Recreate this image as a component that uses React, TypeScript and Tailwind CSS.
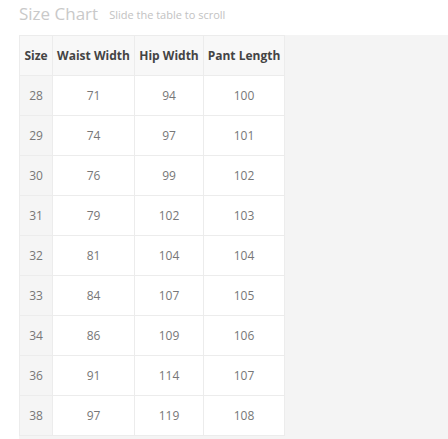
const rows = [
  ["28", "71", "94", "100"],
  ["29", "74", "97", "101"],
  ["30", "76", "99", "102"],
  ["31", "79", "102", "103"],
  ["32", "81", "104", "104"],
  ["33", "84", "107", "105"],
  ["34", "86", "109", "106"],
  ["36", "91", "114", "107"],
  ["38", "97", "119", "108"],
];

const heads = ["Size", "Waist Width", "Hip Width", "Pant Length"];
const widths = ["w-[33px]", "w-[82px]", "w-[69px]", "w-[81px]"];

export default function App() {
  return (
    <div className="h-[439px] w-[448px] overflow-hidden bg-white pl-[19px] font-['Open_Sans',sans-serif]">
      <div className="flex h-[35px] items-start gap-[11px] pt-[3px]">
        <span className="text-[17px] leading-[22px] text-[#c9c9c9]">Size Chart</span>
        <span className="pt-[4px] text-[11px] leading-[16px] text-[#c2c2c2]">Slide the table to scroll</span>
      </div>
      <div className="bg-[#f4f4f4] pb-[4px]">
        <table className="border-collapse bg-white text-center">
          <thead>
            <tr className="h-[40px] bg-[#f8f8f8]">
              {heads.map((h, i) => (
                <th
                  key={h}
                  className={`${widths[i]} border border-[#ececec] p-0 text-[12px] font-bold whitespace-nowrap text-[#444]`}
                >
                  {h}
                </th>
              ))}
            </tr>
          </thead>
          <tbody>
            {rows.map((r) => (
              <tr key={r[0]} className="h-[40px]">
                {r.map((c, i) => (
                  <td
                    key={i}
                    className={`border border-[#ececec] p-0 text-[12px] text-[#777] ${i === 0 ? "bg-[#f5f5f5]" : ""}`}
                  >
                    {c}
                  </td>
                ))}
              </tr>
            ))}
          </tbody>
        </table>
      </div>
    </div>
  );
}
